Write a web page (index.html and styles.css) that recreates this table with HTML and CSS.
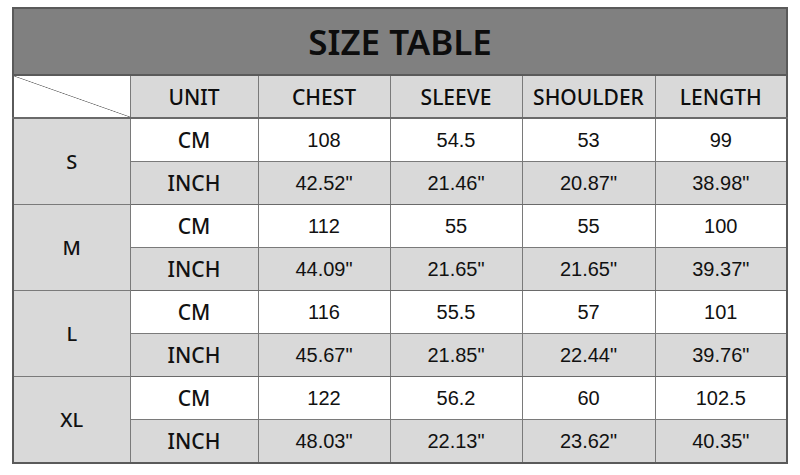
FILE: index.html
```html
<!DOCTYPE html>
<html>
<head>
<meta charset="utf-8">
<link rel="stylesheet" href="styles.css">
</head>
<body>
<table class="size-table">
  <colgroup>
    <col class="c-size"><col class="c-unit"><col class="c-chest"><col class="c-sleeve"><col class="c-shoulder"><col class="c-length">
  </colgroup>
  <tr class="title-row"><th colspan="6" class="title">SIZE TABLE</th></tr>
  <tr class="head-row">
    <th class="diag"></th>
    <th>UNIT</th><th>CHEST</th><th>SLEEVE</th><th>SHOULDER</th><th>LENGTH</th>
  </tr>
  <tr class="cm"><th rowspan="2" class="size">S</th><td class="unit">CM</td><td>108</td><td>54.5</td><td>53</td><td>99</td></tr>
  <tr class="inch"><td class="unit">INCH</td><td>42.52"</td><td>21.46"</td><td>20.87"</td><td>38.98"</td></tr>
  <tr class="cm"><th rowspan="2" class="size">M</th><td class="unit">CM</td><td>112</td><td>55</td><td>55</td><td>100</td></tr>
  <tr class="inch"><td class="unit">INCH</td><td>44.09"</td><td>21.65"</td><td>21.65"</td><td>39.37"</td></tr>
  <tr class="cm"><th rowspan="2" class="size">L</th><td class="unit">CM</td><td>116</td><td>55.5</td><td>57</td><td>101</td></tr>
  <tr class="inch"><td class="unit">INCH</td><td>45.67"</td><td>21.85"</td><td>22.44"</td><td>39.76"</td></tr>
  <tr class="cm"><th rowspan="2" class="size">XL</th><td class="unit">CM</td><td>122</td><td>56.2</td><td>60</td><td>102.5</td></tr>
  <tr class="inch"><td class="unit">INCH</td><td>48.03"</td><td>22.13"</td><td>23.62"</td><td>40.35"</td></tr>
</table>
</body>
</html>
```
FILE: styles.css
```css
html, body {
  margin: 0;
  background: #ffffff;
}
body {
  padding: 7px 0 0 12px;
}
.size-table {
  border-collapse: collapse;
  table-layout: fixed;
  width: 775px;
  border: 2px solid #5a5a5a;
  font-family: "Liberation Sans", Arial, sans-serif;
  font-size: 20px;
  color: #111;
}
.c-size { width: 117px; }
.c-unit { width: 128px; }
.c-chest { width: 132px; }
.c-sleeve { width: 132px; }
.c-shoulder { width: 133px; }
.c-length { width: 132px; }

.size-table th, .size-table td {
  border: 1px solid #7a7a7a;
  padding: 0;
  text-align: center;
  vertical-align: middle;
  height: 42px;
}
.title-row .title {
  height: 65px;
  background: #808080;
  font-family: "Noto Sans", "Open Sans", sans-serif;
  font-weight: 600;
  font-size: 35px;
  color: #0d0d0d;
  border-bottom: 2px solid #5a5a5a;
}
.head-row th {
  height: 41px;
  background: #d9d9d9;
  font-family: "Noto Sans", "Open Sans", sans-serif;
  font-weight: 500;
  font-size: 21px;
  color: #0d0d0d;
  border-bottom: 2px solid #6a6a6a;
}
.head-row th.diag {
  background: #ffffff linear-gradient(to top right, transparent calc(50% - 0.7px), #777 50%, transparent calc(50% + 0.7px));
}
.size {
  background: #d9d9d9;
  font-family: "Noto Sans", "Open Sans", sans-serif;
  font-weight: 500;
  font-size: 20px;
}
.unit {
  font-family: "Noto Sans", "Open Sans", sans-serif;
  font-weight: 500;
  font-size: 21px;
}
.cm td { background: #ffffff; }
.inch td { background: #d9d9d9; }
.inch td, .size { border-bottom-color: #6a6a6a; }
```
